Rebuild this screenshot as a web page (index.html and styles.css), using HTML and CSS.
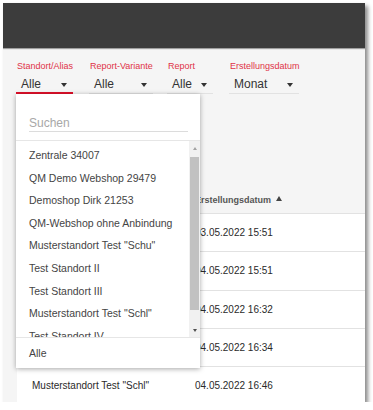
FILE: index.html
```html
<!DOCTYPE html>
<html lang="de">
<head>
  <meta charset="UTF-8" />
  <meta name="viewport" content="width=device-width, initial-scale=1.0"/>
  <title>Reports</title>
  <link rel="stylesheet" href="styles.css">
</head>
<body>

  <div class="frame">
    <header class="topbar"></header>

    <div class="filters">
      <div class="filter f-standort">
        <label>Standort/Alias</label>
        <div class="select active"><span>Alle</span><i class="caret"></i></div>
      </div>
      <div class="filter f-variante">
        <label>Report-Variante</label>
        <div class="select"><span>Alle</span><i class="caret"></i></div>
      </div>
      <div class="filter f-report">
        <label>Report</label>
        <div class="select"><span>Alle</span><i class="caret"></i></div>
      </div>
      <div class="filter f-datum">
        <label>Erstellungsdatum</label>
        <div class="select"><span>Monat</span><i class="caret"></i></div>
      </div>
    </div>

    <!-- first column of the upper rows sits under the open dropdown -->
    <div class="report-table">
      <div class="row head">
        <div class="cell first"></div>
        <div class="cell sorted">Erstellungsdatum</div>
      </div>
      <div class="row">
        <div class="cell first"></div>
        <div class="cell">03.05.2022 15:51</div>
      </div>
      <div class="row">
        <div class="cell first"></div>
        <div class="cell">04.05.2022 15:51</div>
      </div>
      <div class="row">
        <div class="cell first"></div>
        <div class="cell">04.05.2022 16:32</div>
      </div>
      <div class="row">
        <div class="cell first"></div>
        <div class="cell">04.05.2022 16:34</div>
      </div>
      <div class="row">
        <div class="cell first">Musterstandort Test "Schl"</div>
        <div class="cell">04.05.2022 16:46</div>
      </div>
    </div>

    <!-- open dropdown of the Standort filter -->
    <div class="dropdown">
      <div class="search">
        <input type="text" placeholder="Suchen">
      </div>
      <div class="options">
        <ul class="option-list">
          <li>Zentrale 34007</li>
          <li>QM Demo Webshop 29479</li>
          <li>Demoshop Dirk 21253</li>
          <li>QM-Webshop ohne Anbindung</li>
          <li>Musterstandort Test "Schu"</li>
          <li>Test Standort II</li>
          <li>Test Standort III</li>
          <li>Musterstandort Test "Schl"</li>
          <li>Test Standort IV</li>
        </ul>
        <div class="scrollbar">
          <span class="sb-btn sb-up"></span>
          <span class="sb-thumb"></span>
          <span class="sb-track"></span>
          <span class="sb-btn sb-down"></span>
        </div>
      </div>
      <div class="option-all">Alle</div>
    </div>
  </div>

</body>
</html>
```

FILE: styles.css
```css
body {
  margin: 0;
  background: #fff;
  font-family: "Liberation Sans", Arial, sans-serif;
}
.frame {
  position: relative;
  margin: 3px 0 0 3px;
  width: 362px;
  height: 399px;
  overflow: hidden;
  background: #f5f5f5;
  box-shadow: 3px 3px 4px rgba(0, 0, 0, 0.45);
}
.topbar {
  height: 45px;
  background: #3c3c3c;
  box-shadow: 0 1px 1px rgba(0, 0, 0, 0.35);
}

/* filters */
.filters {
  display: flex;
  padding: 12px 0 0 13px;
}
.filter label {
  display: block;
  padding-left: 1px;
  font-size: 9px;
  line-height: 12px;
  color: #e03347;
  white-space: nowrap;
}
.f-standort { width: 57px; margin-right: 16px; }
.f-variante { width: 64px; margin-right: 14px; }
.f-report { width: 46px; margin-right: 16px; }
.f-datum { width: 70px; }
.select {
  display: flex;
  justify-content: space-between;
  align-items: center;
  height: 18px;
  margin-top: 3px;
  padding: 0 6px 0 5px;
  font-size: 12px;
  line-height: 18px;
  color: #333;
  border-bottom: 1px solid #e2e2e2;
}
.select.active {
  height: 17px;
  border-bottom: 2px solid #e0102a;
}
.caret {
  width: 0;
  height: 0;
  margin-top: 2px;
  border-left: 3.5px solid transparent;
  border-right: 3.5px solid transparent;
  border-top: 4px solid #333;
}

/* table */
.report-table {
  margin: 92px 0 0 14px;
}
.row {
  display: grid;
  grid-template-columns: 178px 1fr;
  align-items: center;
  box-sizing: border-box;
  height: 38.33px;
  background: #fff;
  border-bottom: 1px solid #e2e2e2;
  font-size: 10px;
  color: #2a2a2a;
}
.row.head {
  height: 28px;
  background: transparent;
  font-size: 9px;
  font-weight: bold;
  color: #555;
}
.cell {
  white-space: nowrap;
}
.cell.first {
  padding-left: 15px;
}
.sorted::after {
  content: "";
  display: inline-block;
  margin: 0 0 2px 5px;
  border-left: 3.5px solid transparent;
  border-right: 3.5px solid transparent;
  border-bottom: 5px solid #444;
}

/* dropdown panel */
.dropdown {
  position: absolute;
  left: 13px;
  top: 91px;
  width: 184px;
  background: #fff;
  box-shadow: 0 1px 5px rgba(0, 0, 0, 0.35);
}
.search {
  padding: 20px 12px 8px 13px;
  border-bottom: 1px solid #e6e6e6;
}
.search input {
  display: block;
  box-sizing: border-box;
  width: 100%;
  height: 18px;
  padding: 0;
  border: none;
  border-bottom: 1px solid #dcdcdc;
  outline: none;
  font-family: inherit;
  font-size: 12px;
  color: #333;
}
.search input::placeholder {
  color: #a8a8a8;
}
.options {
  display: flex;
  height: 196px;
}
.option-list {
  flex: 1;
  margin: 0;
  padding: 3px 0 0;
  list-style: none;
  overflow: hidden;
}
.option-list li {
  height: 22.6px;
  line-height: 22.6px;
  padding-left: 13px;
  font-size: 10.5px;
  color: #444;
  white-space: nowrap;
}
.scrollbar {
  display: flex;
  flex-direction: column;
  width: 11px;
  background: #f1f1f1;
}
.sb-btn {
  display: flex;
  justify-content: center;
  align-items: center;
  height: 14px;
}
.sb-up::before {
  content: "";
  border-left: 2.5px solid transparent;
  border-right: 2.5px solid transparent;
  border-bottom: 3px solid #a3a3a3;
}
.sb-down::before {
  content: "";
  border-left: 2.5px solid transparent;
  border-right: 2.5px solid transparent;
  border-top: 3px solid #505050;
}
.sb-thumb {
  height: 153px;
  margin: 2px 1px 0;
  background: #c1c1c1;
}
.sb-track {
  flex: 1;
}
.option-all {
  padding: 6px 13px;
  line-height: 18px;
  font-size: 10.5px;
  color: #444;
  border-top: 1px solid #e6e6e6;
}
```
